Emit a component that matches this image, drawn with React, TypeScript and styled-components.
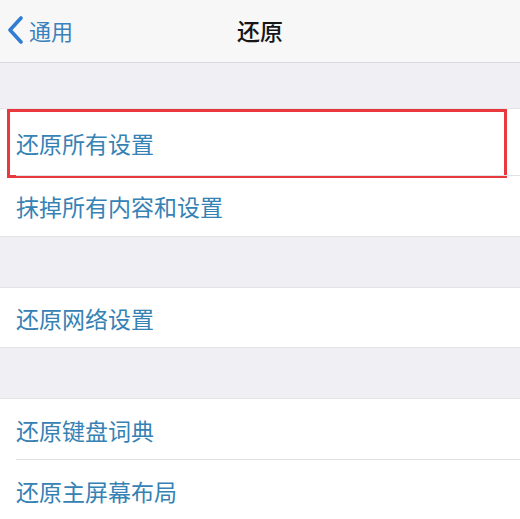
import React from "react";
import styled, { createGlobalStyle } from "styled-components";

const GlobalStyle = createGlobalStyle`
  body {
    margin: 0;
    background: #efeff4;
    font-family: "Noto Sans CJK SC", "Noto Sans", sans-serif;
    overflow: hidden;
  }
`;

const Page = styled.div`
  width: 520px;
  height: 519px;
  background: #efeff4;
  overflow: hidden;
`;

const NavBar = styled.div`
  height: 62px;
  background: #f7f7f7;
  border-bottom: 1px solid #d9d9dc;
  display: grid;
  grid-template-columns: 1fr auto 1fr;
  align-items: center;
`;

const BackButton = styled.div`
  display: flex;
  align-items: center;
  gap: 5px;
  padding-left: 6px;
  color: #3a82bd;
  font-size: 22px;
  margin-top: -2px;
`;

const Title = styled.div`
  font-size: 23px;
  font-weight: 500;
  color: #161616;
  margin-top: -2px;
`;

const Spacer = styled.div<{ $h: number }>`
  height: ${(p) => p.$h}px;
`;

const Group = styled.div`
  background: #fff;
  border-top: 1px solid #e4e4e7;
  border-bottom: 1px solid #e4e4e7;
`;

const Row = styled.div<{ $h: number; $highlight?: boolean; $divider?: boolean }>`
  position: relative;
  height: ${(p) => p.$h}px;
  display: flex;
  align-items: center;
  padding-left: 16px;
  color: #3682b4;
  font-size: 23px;
  &::before {
    content: "";
    display: ${(p) => (p.$divider ? "block" : "none")};
    position: absolute;
    left: 16px;
    right: 0;
    top: -1px;
    border-top: 1px solid #e2e2e5;
  }
  &::after {
    content: "";
    display: ${(p) => (p.$highlight ? "block" : "none")};
    position: absolute;
    left: 7px;
    right: 13px;
    top: 0;
    bottom: -2px;
    border: 3px solid #e83a3e;
  }
`;

const Chevron = () => (
  <svg width="18" height="28" viewBox="0 0 18 28">
    <path
      d="M15 2 L4 14 L15 26"
      fill="none"
      stroke="#2f7dd3"
      strokeWidth="3.6"
      strokeLinecap="round"
      strokeLinejoin="round"
    />
  </svg>
);

export default function App() {
  return (
    <Page>
      <GlobalStyle />
      <NavBar>
        <BackButton>
          <Chevron />
          <span>通用</span>
        </BackButton>
        <Title>还原</Title>
        <div />
      </NavBar>
      <Spacer $h={45} />
      <Group>
        <Row $h={67} $highlight>
          还原所有设置
        </Row>
        <Row $h={60} $divider>
          抹掉所有内容和设置
        </Row>
      </Group>
      <Spacer $h={50} />
      <Group>
        <Row $h={59}>还原网络设置</Row>
      </Group>
      <Spacer $h={50} />
      <Group>
        <Row $h={61}>还原键盘词典</Row>
        <Row $h={61} $divider>
          还原主屏幕布局
        </Row>
      </Group>
    </Page>
  );
}
